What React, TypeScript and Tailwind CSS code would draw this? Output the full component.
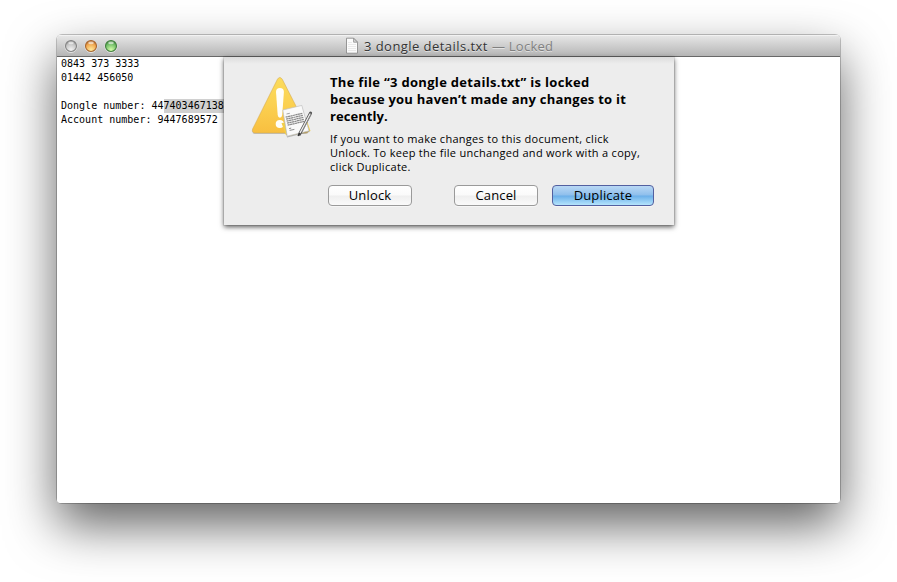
import type { ReactNode } from 'react';

function Light({ body, glow, ring }: { body: string; glow: string; ring: string }) {
  return (
    <svg width="14" height="14" viewBox="0 0 14 14">
      <defs>
        <radialGradient id={'g' + body.slice(1)} cx="0.5" cy="0.85" r="0.8">
          <stop offset="0" stopColor={glow} />
          <stop offset="0.7" stopColor={body} />
          <stop offset="1" stopColor={ring} />
        </radialGradient>
      </defs>
      <circle cx="7" cy="7.6" r="6" fill="none" stroke="#fff" strokeOpacity="0.5" />
      <circle cx="7" cy="7" r="5.5" fill={`url(#g${body.slice(1)})`} stroke={ring} strokeWidth="1.1" />
      <ellipse cx="7" cy="3.9" rx="2.8" ry="1.4" fill="#fff" fillOpacity="0.6" />
    </svg>
  );
}

function DocumentIcon() {
  return (
    <svg width="14" height="17" viewBox="0 0 14 17">
      <path d="M1.5 1.2H8.6L12.5 5.2V16.2H1.5Z" fill="#fbfbfb" stroke="#8c8c8c" strokeWidth="0.9" />
      <path d="M8.6 1.2V5.2H12.5Z" fill="#d8d8d8" stroke="#8c8c8c" strokeWidth="0.8" />
      <path d="M3 5.5H7M3 7.5H11M3 9.5H11M3 11.5H11M3 13.5H11" stroke="#e4e4e4" strokeWidth="0.8" />
    </svg>
  );
}

function WarningIcon() {
  return (
    <svg width="64" height="64" viewBox="0 0 64 64">
      <defs>
        <linearGradient id="warn" x1="0" y1="0" x2="0" y2="1">
          <stop offset="0" stopColor="#fbdc5c" />
          <stop offset="0.5" stopColor="#fbd050" />
          <stop offset="1" stopColor="#f8bf40" />
        </linearGradient>
      </defs>
      <path d="M26.3 6.5Q28.8 2.5 31.4 6.5L56.6 55.8Q58.2 59.8 54.8 60H3.8Q.5 59.8 1.7 55.8Z" fill="#888" fillOpacity="0.45" />
      <path d="M26.3 5.5Q28.8 1.4 31.4 5.5L56.6 54.8Q58.2 58.7 54.8 58.9H3.8Q.5 58.7 1.7 54.8Z" fill="url(#warn)" stroke="#d8ae55" strokeWidth="0.6" />
      <path d="M25 18Q25 14 28.9 14Q32.9 14 32.9 18L31.2 41Q30.8 43.8 28.9 43.8Q27.1 43.8 26.7 41Z" fill="#fffef8" />
      <circle cx="28.8" cy="50" r="4.1" fill="#fffef8" />
      <path d="M30.5 49L34.8 61L40 61.5L59.5 57L56 47Z" fill="#f3cf48" />
      <path d="M32 37L51 33L58.6 58L36 63.4Z" fill="#777" fillOpacity="0.5" />
      <path d="M31.8 36L50.8 31.4L58 56.8L36.2 62.2Z" fill="#fafafa" stroke="#c2c2c2" strokeWidth="0.7" />
      <path d="M35.5 40L38.8 39.3" stroke="#999" strokeWidth="0.9" />
      <g stroke="#8c8c8c" strokeWidth="1.25" strokeDasharray="2.2 0.3">
        <path d="M34.6 43.2L51.3 39.3M35.1 45.2L51.9 41.3M35.6 47.2L52.5 43.3M36.1 49.2L53.1 45.3M36.6 51.2L53.5 47.3" />
      </g>
      <path d="M38.1 54.6L40.2 54.1M38.6 56.4L43.4 55.4" stroke="#8c8c8c" strokeWidth="1" />
      <path d="M59.6 39L48.5 60.3" stroke="#555" strokeWidth="3" strokeLinecap="round" />
      <path d="M59 40L49.2 58.6" stroke="#ededed" strokeWidth="1.3" strokeLinecap="round" />
      <path d="M60.2 40.5L51.5 57" stroke="#999" strokeWidth="0.7" />
      <path d="M48.8 59L47 62" stroke="#333" strokeWidth="1.3" />
    </svg>
  );
}

function Button({ children, className }: { children: ReactNode; className: string }) {
  return (
    <button className={`flex h-[21px] items-center justify-center rounded-[4px] border text-[13px] leading-none tracking-[0.15px] text-black shadow-[0_1px_0_rgba(255,255,255,0.5)] ${className}`}>
      {children}
    </button>
  );
}

const plain = 'border-[#9a9a9a] bg-[linear-gradient(#ffffff_0%,#fafafa_48%,#efefef_52%,#fafafa_100%)]';

export default function App() {
  return (
    <div className="h-[582px] w-[897px] overflow-hidden bg-white pt-[35px] pl-[57px] font-['Open_Sans',sans-serif]">
      <div className="h-[468px] w-[783px] rounded-[5px] shadow-[0_0_0_1px_rgba(0,0,0,0.22),0_22px_50px_rgba(0,0,0,0.62)]">
        <div className="flex h-full flex-col overflow-hidden rounded-t-[4px] rounded-b-[3px] bg-white">
          <header className="flex h-[22px] shrink-0 items-center border-b border-[#686868] bg-[linear-gradient(#e8e8e8,#b5b5b5)] shadow-[inset_0_1px_0_#f2f2f2]">
            <div className="flex w-[288px] gap-[6px] pl-[7px]">
              <Light body="#c4c4c4" glow="#f4f4f4" ring="#858585" />
              <Light body="#f0a54d" glow="#ffeb9c" ring="#a8662f" />
              <Light body="#70bd66" glow="#d5ffaa" ring="#43803f" />
            </div>
            <DocumentIcon />
            <h1 className="ml-[5px] flex gap-[4px] text-[13px] leading-[20px] whitespace-nowrap text-[#333] [text-shadow:0_1px_0_rgba(255,255,255,0.5)]">
              <span className="tracking-[0.45px]">3 dongle details.txt</span>
              <span className="tracking-[0.25px] text-[#808080]">— Locked</span>
            </h1>
          </header>
          <main className="flex items-start">
            <pre className="w-[167px] shrink-0 overflow-hidden pl-[4px] font-['DejaVu_Sans_Mono',monospace] text-[10px] leading-[14px] tracking-[0.01px] text-black">
              {'0843 373 3333\n01442 456050\n\nDongle number: 44'}
              <span className="inline-block h-[14px] w-[61px] bg-[#d0d0d0] align-top">7403467138</span>
              {'\nAccount number: 9447689572'}
            </pre>
            <section className="flex h-[168px] w-[450px] shrink-0 bg-[linear-gradient(#dcdcdc,#ededed_7px)] pt-[17px] pl-[27px] shadow-[0_0_0_1px_rgba(0,0,0,0.08),0_2px_5px_rgba(0,0,0,0.65)]">
              <div className="w-[79px]">
                <WarningIcon />
              </div>
              <div className="whitespace-nowrap text-black">
                <h2 className="text-[13px] leading-[17px] font-bold">
                  <div className="tracking-[0.31px]">The file “3 dongle details.txt” is locked</div>
                  <div className="tracking-[0.24px]">because you haven’t made any changes to it</div>
                  <div className="tracking-[0.05px]">recently.</div>
                </h2>
                <div className="mt-[7px] text-[11px] leading-[14px] tracking-[0.29px]">
                  <div>If you want to make changes to this document, click</div>
                  <div>Unlock. To keep the file unchanged and work with a copy,</div>
                  <div>click Duplicate.</div>
                </div>
                <div className="mt-[11px] -ml-[2px] flex">
                  <Button className={`w-[84px] ${plain}`}>Unlock</Button>
                  <Button className={`ml-[42px] w-[84px] ${plain}`}>Cancel</Button>
                  <Button className="ml-[14px] w-[102px] border-[#5360a0] bg-[linear-gradient(#b9d8f5_0%,#8fbfec_48%,#6bafe9_52%,#b4e4fc_100%)]">Duplicate</Button>
                </div>
              </div>
            </section>
          </main>
        </div>
      </div>
    </div>
  );
}
